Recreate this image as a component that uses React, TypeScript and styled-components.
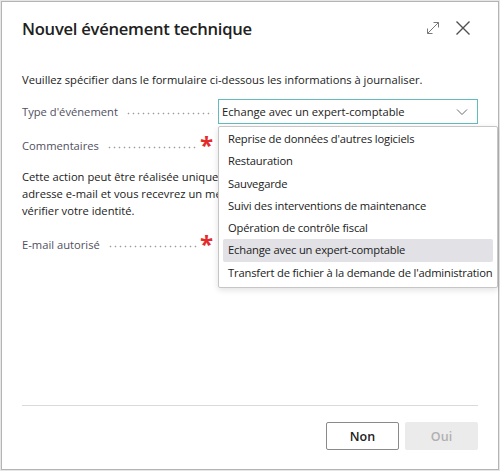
import styled, { createGlobalStyle } from "styled-components";

const GlobalStyle = createGlobalStyle`
  html, body {
    margin: 0;
    padding: 0;
    background: #e6e6e6;
  }
  body {
    font-family: "Open Sans", "Noto Sans", sans-serif;
    color: #212121;
  }
`;

const options = [
  "Reprise de données d'autres logiciels",
  "Restauration",
  "Sauvegarde",
  "Suivi des interventions de maintenance",
  "Opération de contrôle fiscal",
  "Echange avec un expert-comptable",
  "Transfert de fichier à la demande de l'administration",
];

const selected = "Echange avec un expert-comptable";

const App = () => {
  return (
    <>
      <GlobalStyle />
      <Frame>
        <Dialog>
          <Header>
            <Title>Nouvel événement technique</Title>
            <HeaderActions>
              <IconButton aria-label="Agrandir">
                <svg width="16" height="16" viewBox="0 0 16 16" fill="none" stroke="#7a7a7a" strokeWidth="1">
                  <path d="M2.5 13.5 L13.5 2.5" />
                  <path d="M8.5 2.5 H13.5 V7.5" />
                  <path d="M2.5 8.5 V13.5 H7.5" />
                </svg>
              </IconButton>
              <IconButton aria-label="Fermer">
                <svg width="16" height="16" viewBox="0 0 16 16" fill="none" stroke="#505050" strokeWidth="1.4">
                  <path d="M1.5 1.5 L14.5 14.5 M14.5 1.5 L1.5 14.5" />
                </svg>
              </IconButton>
            </HeaderActions>
          </Header>

          <Body>
            <Intro>
              Veuillez spécifier dans le formulaire ci-dessous les informations à journaliser.
            </Intro>

            <FieldRow>
              <Label>
                <LabelText>Type d'événement</LabelText>
                <Leader />
              </Label>
              <SelectWrap>
                <Select>
                  <span>{selected}</span>
                  <svg width="12" height="8" viewBox="0 0 12 8" fill="none" stroke="#6a6a6a" strokeWidth="1">
                    <path d="M1 1.5 L6 6.5 L11 1.5" />
                  </svg>
                </Select>
                <OptionList>
                  {options.map((o) => (
                    <OptionItem key={o} active={o === selected}>
                      {o}
                    </OptionItem>
                  ))}
                </OptionList>
              </SelectWrap>
            </FieldRow>

            <FieldRow compact>
              <Label>
                <LabelText>Commentaires</LabelText>
                <Leader />
                <Required>*</Required>
              </Label>
            </FieldRow>

            <Notice>
              Cette action peut être réalisée uniquement après avoir saisi votre
              <br />
              adresse e-mail et vous recevrez un message pour confirmer et
              <br />
              vérifier votre identité.
            </Notice>

            <FieldRow compact>
              <Label>
                <LabelText>E-mail autorisé</LabelText>
                <Leader />
                <Required>*</Required>
              </Label>
            </FieldRow>
          </Body>

          <Footer>
            <Button>Non</Button>
            <Button disabled>Oui</Button>
          </Footer>
        </Dialog>
      </Frame>
    </>
  );
};

const Frame = styled.div`
  width: 500px;
  height: 471px;
  box-sizing: border-box;
  padding: 1px;
`;

const Dialog = styled.div`
  height: 100%;
  box-sizing: border-box;
  background: #ffffff;
  border: 1px solid #b4b4b4;
  display: flex;
  flex-direction: column;
`;

const Header = styled.div`
  display: flex;
  align-items: center;
  justify-content: space-between;
  padding: 13px 27px 0 20px;
  height: 26px;
`;

const Title = styled.h1`
  margin: 0;
  font-size: 16.6px;
  font-weight: 600;
  color: #212121;
  letter-spacing: -0.25px;
`;

const HeaderActions = styled.div`
  display: flex;
  align-items: center;
  gap: 14px;
`;

const IconButton = styled.button`
  border: none;
  background: none;
  padding: 0;
  width: 16px;
  height: 16px;
  display: flex;
  cursor: pointer;
`;

const Body = styled.div`
  flex: 1;
  padding: 30px 20px 0 20px;
  font-size: 11.2px;
`;

const Intro = styled.p`
  margin: 0 0 11px 0;
  line-height: 17px;
`;

const FieldRow = styled.div<{ compact?: boolean }>`
  display: grid;
  grid-template-columns: 196px 260px;
  align-items: center;
  height: ${(p) => (p.compact ? "22px" : "25px")};
  margin-bottom: ${(p) => (p.compact ? "13px" : "9px")};
`;

const Label = styled.div`
  display: flex;
  align-items: center;
  color: #505060;
  padding-right: 5px;
`;

const LabelText = styled.span`
  white-space: nowrap;
`;

const Leader = styled.span`
  flex: 1;
  height: 3px;
  margin: 3px 0 0 8px;
  background-image: radial-gradient(circle, #9c9c9c 0.7px, transparent 1.1px);
  background-size: 5px 3px;
  background-repeat: repeat-x;
`;

const Required = styled.span`
  color: #e32b2b;
  font-size: 24px;
  font-weight: 700;
  line-height: 1;
  margin: 0 0 13px 3px;
  height: 12px;
`;

const SelectWrap = styled.div`
  position: relative;
  height: 25px;
`;

const Select = styled.div`
  box-sizing: border-box;
  height: 25px;
  border: 1px solid #63bcbc;
  display: flex;
  align-items: center;
  justify-content: space-between;
  padding: 0 9px 0 3px;
  color: #212121;
`;

const OptionList = styled.ul`
  position: absolute;
  top: 27px;
  left: 0;
  width: 280px;
  margin: 0;
  padding: 1px 4px 3px 4px;
  list-style: none;
  background: #ffffff;
  border: 1px solid #c6c6c6;
  border-radius: 2px;
  box-shadow: 0 2px 6px rgba(0, 0, 0, 0.12);
  box-sizing: border-box;
  z-index: 2;
`;

const OptionItem = styled.li<{ active?: boolean }>`
  height: 22.3px;
  line-height: 22.3px;
  padding: 0 5px;
  white-space: nowrap;
  letter-spacing: -0.17px;
  color: #212121;
  background: ${(p) => (p.active ? "#e1e1e6" : "transparent")};
  border-radius: 2px;
`;

const Notice = styled.p`
  margin: 0 0 13px 0;
  line-height: 17px;
  white-space: nowrap;
`;

const Footer = styled.div`
  margin: 0 20px;
  border-top: 1px solid #dadada;
  padding: 16px 0 19px 0;
  display: flex;
  justify-content: flex-end;
  gap: 6px;
`;

const Button = styled.button`
  width: 73px;
  height: 28px;
  box-sizing: border-box;
  border-radius: 2px;
  font-family: "Open Sans", "Noto Sans", sans-serif;
  font-size: 12.5px;
  font-weight: 600;
  color: #212121;
  background: #ffffff;
  border: 1px solid #8a8a8a;
  cursor: pointer;

  &:disabled {
    background: #ebebeb;
    border-color: #ebebeb;
    color: #b0b0b0;
    cursor: default;
  }
`;

export default App;
